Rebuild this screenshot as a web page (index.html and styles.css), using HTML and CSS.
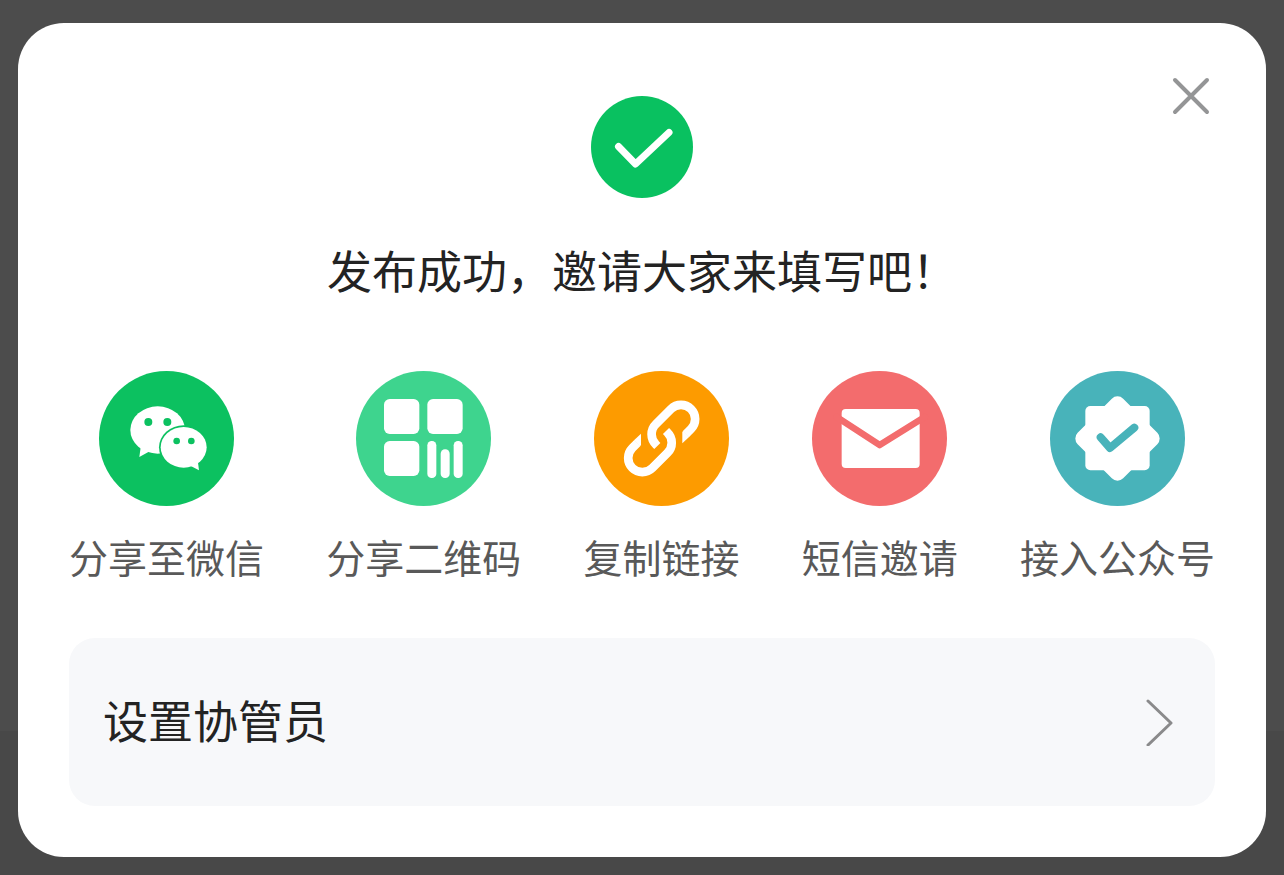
FILE: index.html
```html
<!DOCTYPE html>
<html lang="zh-CN">

<head>
    <meta charset="UTF-8">
    <meta name="viewport" content="width=device-width, initial-scale=1.0">
    <title>发布成功</title>
    <link rel="stylesheet" href="styles.css">
</head>

<body>

    <main class="dialog">
        <button type="button" class="close-btn" aria-label="关闭">
            <svg viewBox="0 0 44 44">
                <path d="M6 6L38 38M38 6L6 38" />
            </svg>
        </button>

        <svg class="success-icon" viewBox="0 0 102 102">
            <circle cx="51" cy="51" r="51" />
            <path d="M27.5 50.5L44.5 68L78 36.5" />
        </svg>
        <h1 class="title">发布成功，邀请大家来填写吧！</h1>

        <div class="share-list">
            <button type="button" class="share-item">
                <svg class="share-icon wechat" viewBox="27 33 405 405">
                    <path class="white" d="M153 255L148 291L182 272Z" />
                    <ellipse class="white" cx="203" cy="210" rx="82" ry="71" />
                    <circle class="hole" cx="175" cy="186" r="12" />
                    <circle class="hole" cx="232" cy="186" r="12" />
                    <ellipse class="hole" cx="281" cy="262" rx="74" ry="66" />
                    <path class="white" d="M298 316L327 331L323 300Z" />
                    <ellipse class="white" cx="281" cy="262" rx="69" ry="61" />
                    <circle class="hole" cx="260" cy="243" r="10" />
                    <circle class="hole" cx="304" cy="243" r="10" />
                </svg>
                <span>分享至微信</span>
            </button>
            <button type="button" class="share-item">
                <svg class="share-icon qrcode" viewBox="33 33 405 405">
                    <rect class="white" x="117" y="117" width="106" height="105" rx="17" />
                    <rect class="white" x="247" y="117" width="106" height="105" rx="17" />
                    <rect class="white" x="117" y="243" width="106" height="105" rx="17" />
                    <rect class="white" x="247" y="243" width="27" height="111" rx="13" />
                    <rect class="white" x="287" y="268" width="27" height="86" rx="13" />
                    <rect class="white" x="326" y="243" width="27" height="111" rx="13" />
                </svg>
                <span>分享二维码</span>
            </button>
            <button type="button" class="share-item">
                <svg class="share-icon link" viewBox="36 33 405 405">
                    <g>
                        <path class="line" d="M312 222L327 207A42 42 0 0 0 267 147L222 192A43 43 0 0 0 222 254L226 258" />
                        <path class="white" d="M301 216L304 212L322 230L301 250Z" />
                    </g>
                    <g transform="rotate(180 239 235.5)">
                        <path class="line" d="M312 222L327 207A42 42 0 0 0 267 147L222 192A43 43 0 0 0 222 254L226 258" />
                        <path class="white" d="M301 216L304 212L322 230L301 250Z" />
                    </g>
                </svg>
                <span>复制链接</span>
            </button>
            <button type="button" class="share-item">
                <svg class="share-icon sms" viewBox="36 33 405 405">
                    <rect class="white" x="125" y="147" width="234" height="177" rx="12" />
                    <path class="fold" d="M110 171L239 255L374 171" />
                </svg>
                <span>短信邀请</span>
            </button>
            <button type="button" class="share-item">
                <svg class="share-icon account" viewBox="36 33 405 405">
                    <rect class="white" x="142" y="138" width="193" height="193" rx="15" />
                    <rect class="white" x="142" y="139" width="193" height="193" rx="24" transform="rotate(45 238.5 235.5)" />
                    <path class="tick" d="M188 232L216 264L289 203" />
                </svg>
                <span>接入公众号</span>
            </button>
        </div>

        <button type="button" class="setting-row">
            <span>设置协管员</span>
            <svg class="arrow" viewBox="0 0 28 48">
                <path d="M3 3L26 25L3 47" />
            </svg>
        </button>
    </main>

</body>

</html>
```
FILE: styles.css
```css
* {
    box-sizing: border-box;
}

body {
    margin: 0;
    padding: 23px 18px 18px;
    min-height: 100vh;
    font-family: "Noto Sans CJK SC", sans-serif;
    background: linear-gradient(#4c4c4c 731px, #484848 731px);
}

button {
    margin: 0;
    padding: 0;
    border: none;
    background: none;
    font-family: inherit;
    cursor: pointer;
}

svg {
    display: block;
    fill: none;
    stroke-linecap: round;
    stroke-linejoin: round;
}

.dialog {
    position: relative;
    padding: 73px 51px 51px;
    border-radius: 46px;
    background: #fff;
}

.close-btn {
    position: absolute;
    top: 51px;
    right: 53px;
    width: 44px;
    height: 44px;
}

.close-btn path {
    stroke: #949596;
    stroke-width: 4;
}

.success-icon {
    width: 102px;
    height: 102px;
    margin: 0 auto;
}

.success-icon circle {
    fill: #09c160;
}

.success-icon path {
    stroke: #fff;
    stroke-width: 7;
}

.title {
    margin: 40px 0 69px;
    font-size: 45px;
    font-weight: 400;
    line-height: 64px;
    text-align: center;
    color: #232323;
}

.share-list {
    display: flex;
    justify-content: space-between;
}

.share-item {
    display: flex;
    flex-direction: column;
    align-items: center;
    gap: 22px;
    font-size: 39px;
    line-height: 56px;
    white-space: nowrap;
    color: #595959;
}

.share-icon {
    width: 135px;
    height: 135px;
    border-radius: 50%;
}

.white {
    fill: #fff;
}

.wechat {
    background: #0cc160;
}

.hole {
    fill: #0cc160;
}

.qrcode {
    background: #3ed48e;
}

.link {
    background: #fd9b00;
}

.line {
    stroke: #fff;
    stroke-width: 26;
    stroke-linecap: butt;
}

.sms {
    background: #f36c6d;
}

.fold {
    stroke: #f36c6d;
    stroke-width: 20;
}

.account {
    background: #48b3ba;
}

.tick {
    stroke: #48b3ba;
    stroke-width: 24;
}

.setting-row {
    display: flex;
    align-items: center;
    justify-content: space-between;
    width: 100%;
    margin-top: 54px;
    padding: 50px 42px 54px 34px;
    border-radius: 26px;
    background: #f7f8fa;
    font-size: 45px;
    line-height: 64px;
    color: #232323;
}

.arrow {
    width: 28px;
    height: 48px;
    margin-top: 4px;
}

.arrow path {
    stroke: #8a8a8b;
    stroke-width: 3;
}
```
